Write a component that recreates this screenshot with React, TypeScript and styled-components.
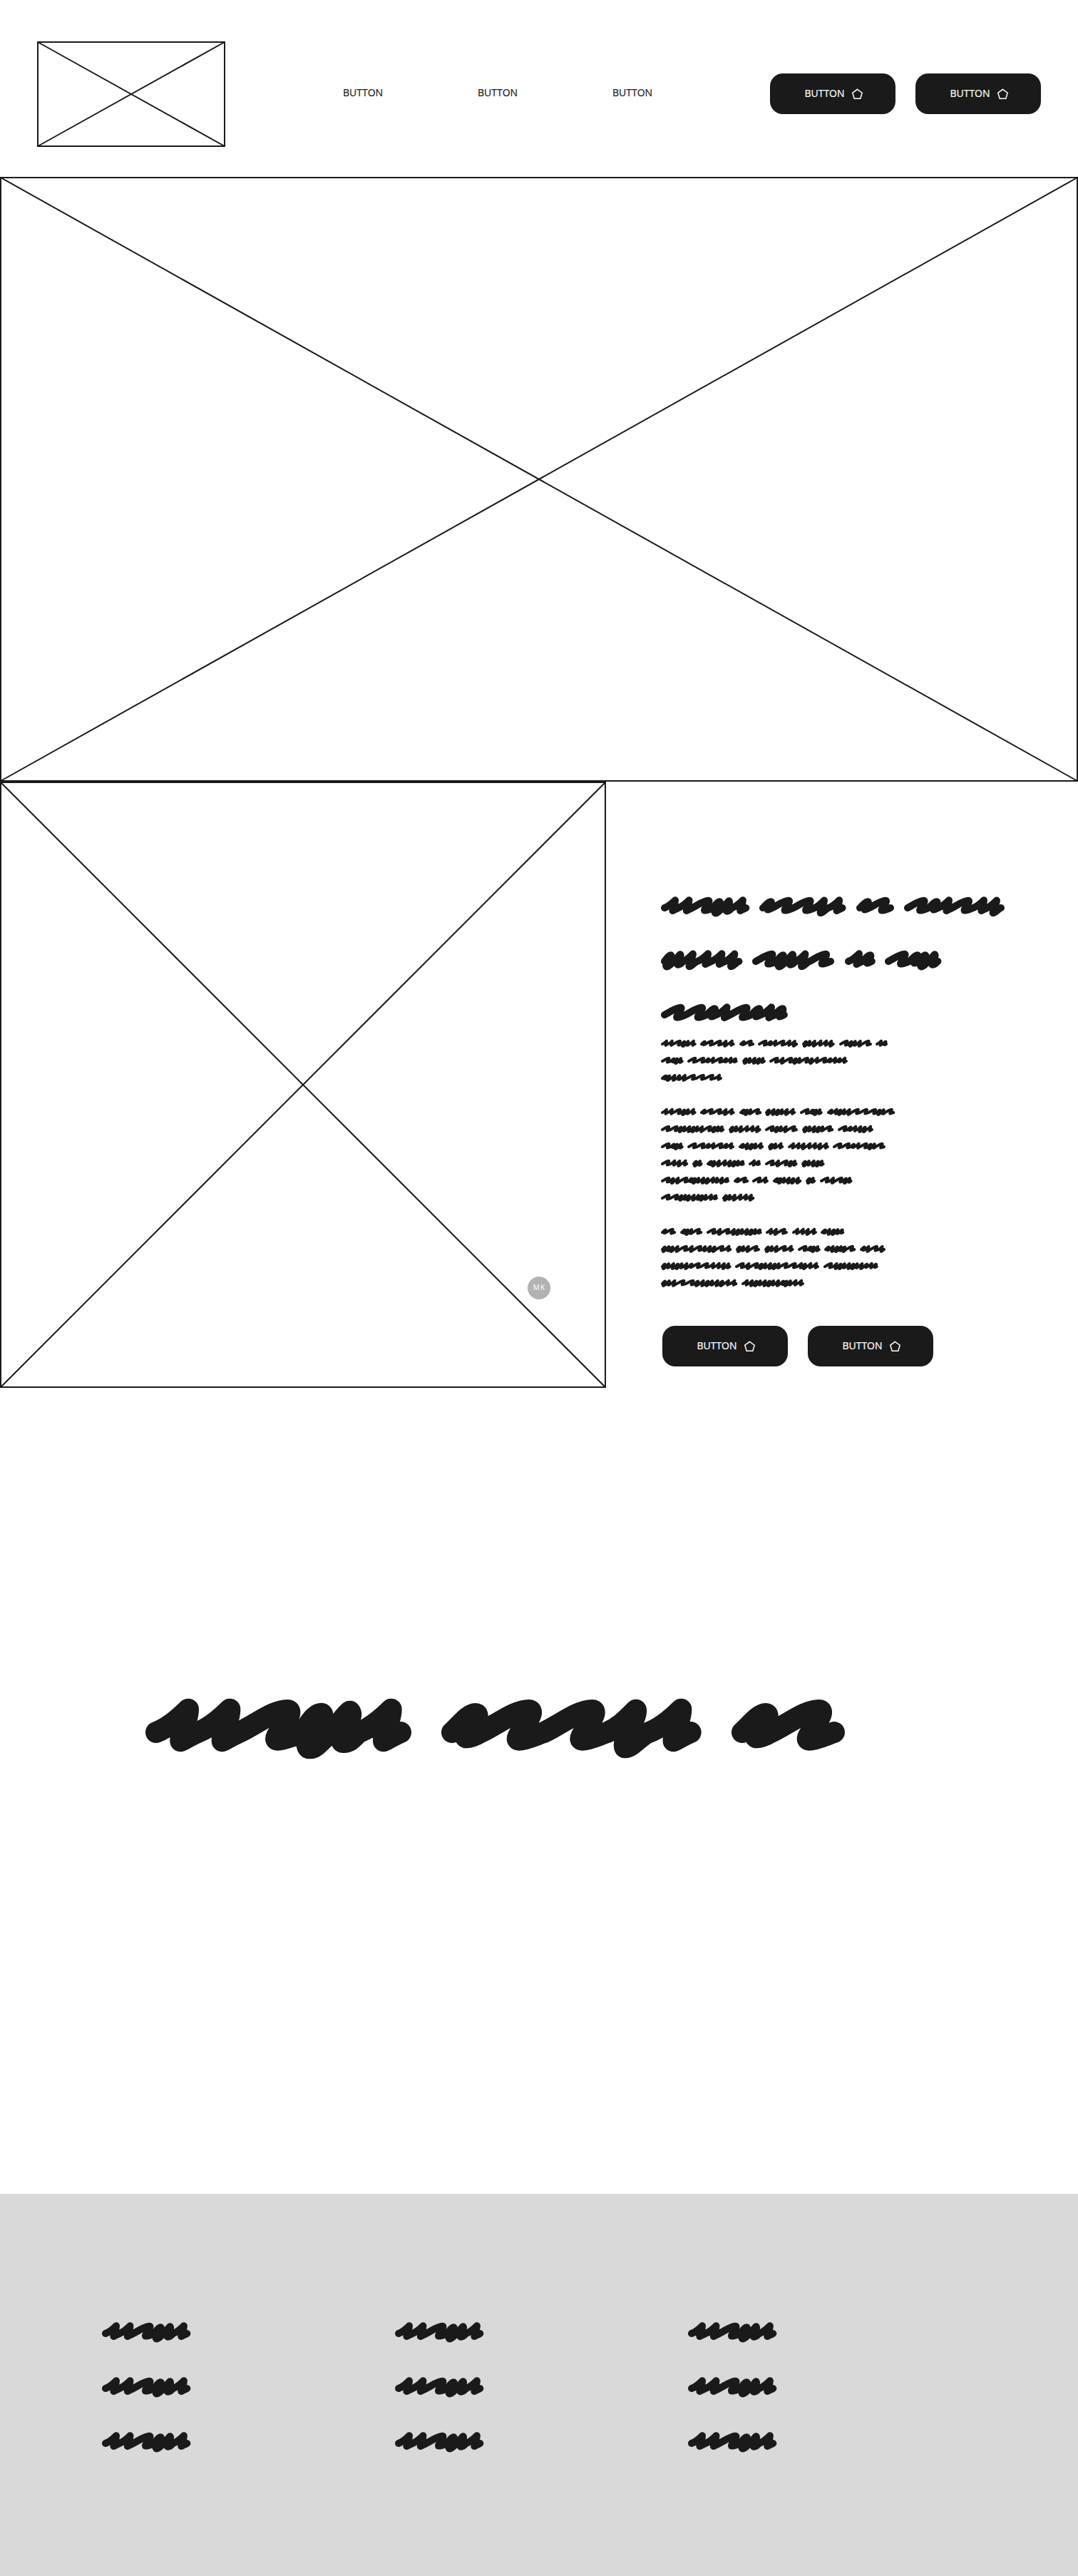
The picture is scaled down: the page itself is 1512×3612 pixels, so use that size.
import React from "react";
import styled, { createGlobalStyle } from "styled-components";

const INK = "#1a1a1a";

const GlobalStyle = createGlobalStyle`
  body {
    margin: 0;
    background: #fff;
    color: ${INK};
    font-family: "Open Sans", "Noto Sans", sans-serif;
  }
`;

/* ---------- scribble text ---------- */

type Glyph = { advance: number; draw: (x: number, k: number) => string };

// Points are in 1/360 em, relative to the pen position.
const glyph = (advance: number, pts: number[]): Glyph => ({
  advance,
  draw: (x, k) => {
    let d = "";
    for (let i = 0; i < pts.length; i += 6) {
      d += `C${pts
        .slice(i, i + 6)
        .map((v, j) => (j % 2 ? v : (x + v * k).toFixed(1)))
        .join(" ")}`;
    }
    return d;
  },
});

const GLYPHS: Record<string, Glyph> = {
  A: glyph(175, [40, -15, 90, -52, 135, -97, 137, -45, 100, -15, 103, 37, 128, 25, 145, 12, 175, 0]),
  W: glyph(266, [75, -36, 143, -93, 203, -93, 222, -93, 208, -66, 195, -42, 175, -10, 140, 32, 160, 32, 190, 32, 235, 10, 266, 0]),
  D: glyph(121, [28, -23, 68, -78, 99, -78, 115, -78, 104, -50, 95, -36, 75, -10, 45, 22, 61, 22, 75, 22, 100, 12, 121, 0]),
  X: glyph(176, [50, -20, 85, -58, 121, -94, 127, -60, 60, 30, 74, 64, 105, 64, 140, 12, 176, 0]),
  E: glyph(119, [25, -30, 50, -79, 79, -79, 97, -79, 60, -30, 40, 0, 22, 30, 8, 67, 32, 67, 60, 67, 85, 25, 119, 0]),
  F: glyph(119, [30, -25, 52, -65, 80, -88, 95, -70, 70, -40, 55, -10, 45, 10, 35, 42, 54, 42, 85, 42, 98, 15, 119, 0]),
};

const ScribbleLine = styled.div<{ $size: number }>`
  display: flex;
  gap: ${(p) => p.$size * 0.35}px;
  height: ${(p) => p.$size}px;
  white-space: nowrap;
`;

const WordSvg = styled.svg`
  display: block;
  flex: none;
  overflow: visible;
  fill: none;
  stroke: ${INK};
  stroke-width: 90;
  stroke-linecap: round;
  stroke-linejoin: round;
`;

const Word = ({ code, size }: { code: string; size: number }) => {
  const [letters, fixed] = code.split(":");
  const natural = [...letters].reduce((s, c) => s + GLYPHS[c].advance, 0);
  const width = fixed ? Number(fixed) * 7.5 : natural;
  const k = width / natural;
  let x = 45;
  let d = "M45 0";
  for (const c of letters) {
    d += GLYPHS[c].draw(x, k);
    x += GLYPHS[c].advance * k;
  }
  return (
    <WordSvg
      width={((width + 90) * size) / 360}
      height={size}
      viewBox={`0 -180 ${width + 90} 360`}
      aria-hidden
    >
      <path d={d} />
    </WordSvg>
  );
};

const Line = ({ text, size }: { text: string; size: number }) => (
  <ScribbleLine $size={size}>
    {text.split(" ").map((w, i) => (
      <Word key={i} code={w} size={size} />
    ))}
  </ScribbleLine>
);

/* ---------- placeholders and buttons ---------- */

const Frame = styled.svg<{ $w: number; $h: number }>`
  display: block;
  flex: none;
  width: ${(p) => p.$w}px;
  height: ${(p) => p.$h}px;
  fill: none;
  stroke: ${INK};
  stroke-width: 2;
`;

const Placeholder = ({ w, h }: { w: number; h: number }) => (
  <Frame $w={w} $h={h} viewBox={`0 0 ${w} ${h}`}>
    <rect x="1" y="1" width={w - 2} height={h - 2} />
    <path d={`M1 1L${w - 1} ${h - 1}M${w - 1} 1L1 ${h - 1}`} />
  </Frame>
);

const Pill = styled.button`
  display: flex;
  align-items: center;
  gap: 10px;
  box-sizing: border-box;
  width: 176px;
  height: 57px;
  padding: 0 0 0 48px;
  border: 0;
  border-radius: 18px;
  background: ${INK};
  color: #fff;
  font: 400 14px/20px "Open Sans", "Noto Sans", sans-serif;
  -webkit-text-stroke: 0.2px currentColor;
`;

const PillLabel = styled.span`
  width: 57px;
  margin-bottom: 2px;
  white-space: nowrap;
`;

const Pentagon = styled.svg`
  width: 16px;
  height: 16px;
  margin-top: 1px;
  fill: none;
  stroke: #fff;
  stroke-width: 1.5;
`;

const PillRow = styled.div`
  display: flex;
  gap: 28px;
`;

const ActionButton = () => (
  <Pill>
    <PillLabel>BUTTON</PillLabel>
    <Pentagon viewBox="0 0 16 16">
      <path d="M7.5 1.3L14.2 6.2L11.8 14.3H3.2L0.8 6.2Z" />
    </Pentagon>
  </Pill>
);

/* ---------- page sections ---------- */

const Page = styled.div`
  width: 1512px;
  height: 3612px;
  display: flex;
  flex-direction: column;
  background: #fff;
  overflow: hidden;
`;

const Header = styled.header`
  display: flex;
  align-items: flex-start;
  box-sizing: border-box;
  height: 248px;
  padding: 58px 52px 42px;
`;

const Nav = styled.nav`
  display: grid;
  grid-template-columns: repeat(3, 189px);
  margin: 62px 0 0 165px;
  font-size: 14px;
  line-height: 20px;
  -webkit-text-stroke: 0.2px currentColor;
`;

const HeaderActions = styled.div`
  margin: 45px 0 0 auto;
`;

const Split = styled.section`
  display: flex;
  height: 850px;
`;

const Picture = styled.div`
  position: relative;
  width: 850px;
`;

const Avatar = styled.span`
  position: absolute;
  left: 740px;
  top: 694px;
  width: 32px;
  height: 32px;
  border-radius: 50%;
  background: #b3b3b3;
  color: #fff;
  font-size: 10px;
  line-height: 31px;
  letter-spacing: 1.2px;
  text-indent: 1.2px;
  text-align: center;
`;

const Copy = styled.div`
  display: flex;
  flex-direction: column;
  align-items: flex-start;
  padding: 157px 0 0 77px;
`;

const Heading = styled.div`
  display: grid;
  gap: 35px;
  margin-bottom: 13px;
`;

const Paragraph = styled.div`
  display: grid;
  gap: 8px;
  margin-bottom: 32px;
`;

const CopyActions = styled.div`
  margin: 19px 0 0 2px;
`;

const Statement = styled.section`
  box-sizing: border-box;
  height: 1130px;
  padding: 423px 0 0 204px;
`;

const Footer = styled.footer`
  display: grid;
  grid-template-columns: repeat(3, 411px);
  align-items: start;
  flex: 1;
  padding: 176px 0 0 143px;
  background: #d9d9d9;
`;

const FooterColumn = styled.div`
  display: grid;
  gap: 37px;
`;

const heading = ["AAWEFA DWWXA DW WDAWAX", "EFXAAX WEFXW AD WDEF", "WWDAWDAD"];

const paragraphs = [
  [
    "AAWEFA DWWXA DW WDAWAX EFXAAX WEFXW AD",
    "WDEF WWDAWDAD:200 EFXEF:87 WXWEFWEAWDADA:318",
    "DEXFXWWWA:246",
  ],
  [
    "AAWEFA DWWXA DEFW:82 EXEFXA:118 WDEF DAEFXWWWEFW:274",
    "WWEFXEFXWEFF:256 EFXAAX WEFXW EFXEFW:121 WDAXEA:138",
    "WDEF WWDAWDA:186 DXEFA:94 EFA:55 AAXAAXA:162 WWDAWEFW:210",
    "WAXA:103 EF:32 DEXAXEFD:149 AD WXWEF:125 EFXEF:86",
    "WEXWDEFXEAFXD:276 DW WA:57 DEFXEX:109 EF:31 WXWEF:125",
    "WWEFEXFEFAD:228 EFXAAX:124",
  ],
  [
    "DW DEFW:82 WXWXEFXEFD:221 AXW:81 AAXA:93 DXEFD:88",
    "EFEXWXWFXEWA:286 EFXW:90 EFXWA:113 WDEF DXEFEW:121 DXWX:96",
    "EFXEFXDWWAAXF:284 WXWEFXEFWWAEAA:342 WXEFXEFXDAD:218",
    "EFXWWEXEFXEAA:310 AXEFXEFXDEFAA:252",
  ],
];

const rows = [0, 1, 2];

export default function App() {
  return (
    <>
      <GlobalStyle />
      <Page>
        <Header>
          <Placeholder w={264} h={148} />
          <Nav>
            {rows.map((i) => (
              <span key={i}>BUTTON</span>
            ))}
          </Nav>
          <HeaderActions>
            <PillRow>
              <ActionButton />
              <ActionButton />
            </PillRow>
          </HeaderActions>
        </Header>
        <Placeholder w={1512} h={848} />
        <Split>
          <Picture>
            <Placeholder w={850} h={850} />
            <Avatar>MK</Avatar>
          </Picture>
          <Copy>
            <Heading>
              {heading.map((l) => (
                <Line key={l} text={l} size={40} />
              ))}
            </Heading>
            {paragraphs.map((p, i) => (
              <Paragraph key={i}>
                {p.map((l) => (
                  <Line key={l} text={l} size={16} />
                ))}
              </Paragraph>
            ))}
            <CopyActions>
              <PillRow>
                <ActionButton />
                <ActionButton />
              </PillRow>
            </CopyActions>
          </Copy>
        </Split>
        <Statement>
          <Line text="AAWEFA DWWXA DW" size={120} />
        </Statement>
        <Footer>
          {rows.map((c) => (
            <FooterColumn key={c}>
              {rows.map((r) => (
                <Line key={r} text="AAWEFA" size={40} />
              ))}
            </FooterColumn>
          ))}
        </Footer>
      </Page>
    </>
  );
}
